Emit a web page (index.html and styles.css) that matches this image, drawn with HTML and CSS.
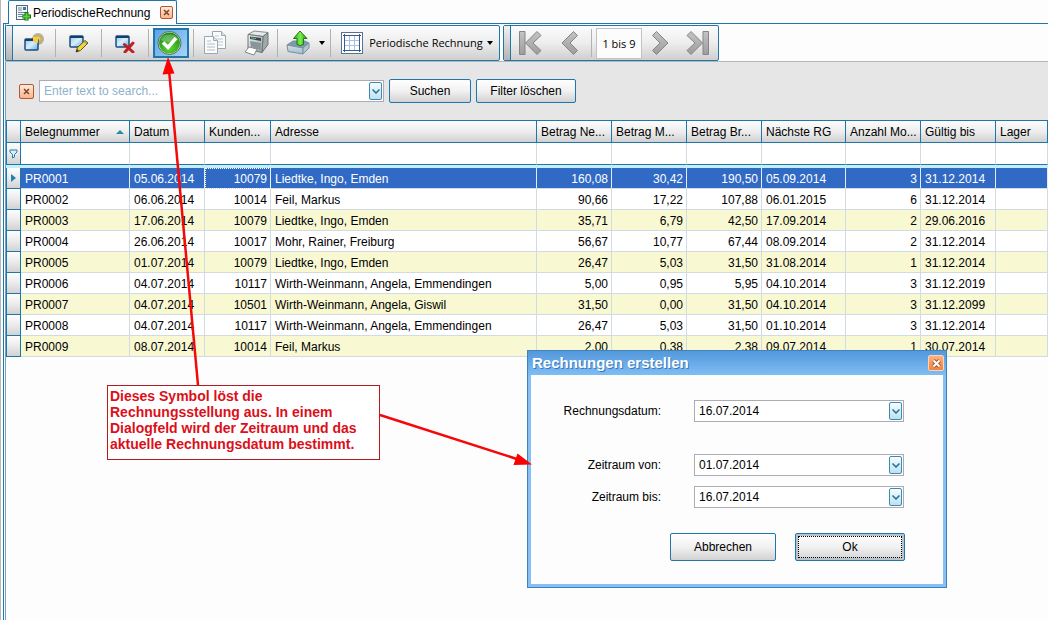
FILE: index.html
```html
<!DOCTYPE html>
<html lang="de">
<head>
<meta charset="utf-8">
<title>PeriodischeRechnung</title>
<link rel="stylesheet" href="styles.css">
</head>
<body>
<svg width="0" height="0" class="defs" aria-hidden="true">
  <defs>
    <linearGradient id="win" x1="0" y1="0" x2="1" y2="1"><stop offset="0" stop-color="#8fc4ee"/><stop offset=".5" stop-color="#d8effc"/><stop offset="1" stop-color="#62aee8"/></linearGradient>
    <linearGradient id="nav" x1="0" y1="0" x2="0" y2="1"><stop offset="0" stop-color="#c4c4c4"/><stop offset="1" stop-color="#9c9c9c"/></linearGradient>
    <radialGradient id="ball" cx=".5" cy=".75" r=".7"><stop offset="0" stop-color="#5ed62f"/><stop offset="1" stop-color="#1f8c1c"/></radialGradient>
    <radialGradient id="glow"><stop offset="0" stop-color="#fff3a0"/><stop offset=".4" stop-color="#e0b84a"/><stop offset="1" stop-color="#77705e" stop-opacity=".45"/></radialGradient>
    <linearGradient id="up" x1="0" y1="0" x2="1" y2="0"><stop offset="0" stop-color="#27a012"/><stop offset=".5" stop-color="#7df050"/><stop offset="1" stop-color="#1f8f10"/></linearGradient>
    <linearGradient id="metal" x1="0" y1="0" x2="1" y2="1"><stop offset="0" stop-color="#f4f6f7"/><stop offset="1" stop-color="#929c9f"/></linearGradient>
    <linearGradient id="tray" x1="0" y1="0" x2="0" y2="1"><stop offset="0" stop-color="#d3e2ec"/><stop offset="1" stop-color="#a3bbca"/></linearGradient>
  </defs>
</svg>

<main class="workspace">
  <header class="tabs">
    <div class="tab">
      <svg class="tab-icon" width="16" height="16" viewBox="0 0 16 16" aria-hidden="true">
        <rect x="1.500" y=".5" width="11" height="14" fill="#f3f7fa" stroke="#52687c"/>
        <path d="M3 3h4M3 5h4M3 7.500h8M3 9.500h5M3 11.500h5" stroke="#6a86a0"/><rect x="8" y="2" width="3" height="3" fill="#3f78a8"/>
        <path d="M11.500 7v8.500M7.500 11.500H16" stroke="#176f12" stroke-width="4"/><path d="M11.500 8v7M8 11.500h7" stroke="#54d33a" stroke-width="2"/>
      </svg>
      <span>PeriodischeRechnung</span>
      <button class="close" type="button" aria-label="Tab schließen"><svg width="7" height="7" viewBox="0 0 7 7"><path d="M1 1l5 5M6 1L1 6" stroke="#7d4225" stroke-width="1.500"/></svg></button>
    </div>
  </header>

  <section class="panel">
    <nav class="toolbars">
      <div class="toolbar">
        <span class="grip"></span>
        <button class="tool w42" type="button" aria-label="Neu"><svg width="20" height="20" viewBox="0 0 20 20"><circle cx="14" cy="6" r="6" fill="url(#glow)"/><rect x="1" y="6" width="13" height="11" rx="1" fill="url(#win)" stroke="#1d4e7c" stroke-width="1.500"/><path d="M1 7h13" stroke="#153f68" stroke-width="2"/><path d="M9 4l5 0 0 6-5-1z" fill="#f6cd45"/></svg></button>
        <i class="sep"></i>
        <button class="tool w45" type="button" aria-label="Bearbeiten"><svg width="22" height="20" viewBox="0 0 22 20"><rect x="2" y="3" width="13" height="11" rx="1" fill="url(#win)" stroke="#1d4e7c" stroke-width="1.500"/><path d="M2 4h13" stroke="#153f68" stroke-width="2"/><path d="M8 19l1.500-4.500L17 7.500l3 2.500-7.500 7.500z" fill="#f1d53a" stroke="#5d5418"/><path d="M16 8.500l3 2.500" stroke="#8a8a80"/><path d="M8 19l1-3 2 2z" fill="#403818"/></svg></button>
        <i class="sep"></i>
        <button class="tool w46" type="button" aria-label="Löschen"><svg width="22" height="20" viewBox="0 0 22 20"><rect x="2" y="3" width="13" height="11" rx="1" fill="url(#win)" stroke="#1d4e7c" stroke-width="1.500"/><path d="M2 4h13" stroke="#153f68" stroke-width="2"/><path d="M10.500 11.500l8.500 7.500M19 10l-8 9" stroke="#c21f22" stroke-width="3" stroke-linecap="round"/></svg></button>
        <i class="sep"></i>
        <button class="tool active" type="button" aria-label="Rechnungen erstellen"><svg width="26" height="26" viewBox="0 0 26 26"><circle cx="12.500" cy="13" r="11.500" fill="#cfe0d4" stroke="#51715b"/><circle cx="12.500" cy="13" r="10.500" fill="url(#ball)"/><path d="M3.500 10a9.500 8 0 0 1 18 0q-9 4-18 0z" fill="#fff" opacity=".25"/><path d="M6 12.500l5 5 8-9.500" fill="none" stroke="#fff" stroke-width="3.500"/></svg></button>
        <i class="sep"></i>
        <button class="tool w42" type="button" aria-label="Kopieren"><svg width="24" height="26" viewBox="0 0 24 26"><path d="M9.500 1.500h9l4 4v13h-13z" fill="#fafcfd" stroke="#9ba7ae"/><path d="M18.500 1.500v4h4" fill="#dfe6ea" stroke="#9ba7ae"/><path d="M12 6h4M12 9h8M12 12h8M12 15h8" stroke="#bcc8cf"/><path d="M1.500 6.500h9l4 4v13h-13z" fill="#fafcfd" stroke="#9ba7ae"/><path d="M10.500 6.500v4h4" fill="#dfe6ea" stroke="#9ba7ae"/><path d="M4 11h4M4 14h8M4 17h8M4 20h8" stroke="#b1bec6"/></svg></button>
        <button class="tool w41" type="button" aria-label="Drucken"><svg width="26" height="26" viewBox="0 0 26 26"><path d="M4 4.500l6-3.500 14 1.500-5 4z" fill="#e6eaea" stroke="#858e90"/><path d="M19 6.500l5-4v12l-6 8z" fill="#9fa8aa" stroke="#6b7577"/><path d="M4 4.500l15 2-1 16-14-3z" fill="url(#metal)" stroke="#6b7577"/><path d="M6 6.500l11 1.500v3L6 9z" fill="#3d4648"/><path d="M7 7.800l5 .8" stroke="#58c38c"/><path d="M6 11l11 2-.5 7L7 17z" fill="#89959a"/><path d="M5 17l8 2-3 6-9-3z" fill="#fff" stroke="#808a8e"/></svg></button>
        <i class="sep"></i>
        <button class="tool export" type="button" aria-label="Exportieren"><svg width="24" height="26" viewBox="0 0 24 26"><path d="M1 15l6-4h12l4 2-5 5H5z" fill="#8199a9" stroke="#7890a0"/><path d="M1 15l16 3v6L2 21.500z" fill="url(#tray)" stroke="#7890a0"/><path d="M17 18l6-5v5l-6 6z" fill="#b3c7d3" stroke="#7890a0"/><path d="M14 1l7 7.500-3.500 0v6q-3.500 2-6.500 0v-6H7.500z" fill="url(#up)" stroke="#1b7a10"/></svg><b class="arrow"></b></button>
        <i class="sep"></i>
        <button class="tool layout" type="button"><svg width="22" height="22" viewBox="0 0 22 22"><rect x=".5" y=".5" width="21" height="21" fill="#fff" stroke="#5d7188"/><path d="M4 8.500h14M4 13.500h14M8.500 4v14M13.500 4v14" stroke="#a8c0e8"/><path d="M3.500 2v18M18.500 2v18M2 3.500h18M2 18.500h18" stroke="#355a94"/></svg><span>Periodische Rechnung</span><b class="arrow"></b></button>
      </div>
      <div class="toolbar">
        <span class="grip"></span>
        <button class="tool first" type="button" aria-label="Erste Seite"><svg width="24" height="26" viewBox="0 0 24 26"><path d="M1.500 1.500h5.500v23H1.500zM19 1.500l4 4-8 7.500 8 7.500-4 4L7.500 13z" fill="url(#nav)" stroke="#858585"/></svg></button>
        <button class="tool prev" type="button" aria-label="Zurück"><svg width="18" height="26" viewBox="0 0 18 26"><path d="M12.500 1.500l4 4L9 13l7.500 7.500-4 4L1 13z" fill="url(#nav)" stroke="#858585"/></svg></button>
        <i class="sep"></i>
        <output class="range">1 bis 9</output>
        <button class="tool next" type="button" aria-label="Weiter"><svg width="18" height="26" viewBox="0 0 18 26"><path d="M5.500 1.500l-4 4L9 13l-7.500 7.500 4 4L17 13z" fill="url(#nav)" stroke="#858585"/></svg></button>
        <button class="tool last" type="button" aria-label="Letzte Seite"><svg width="24" height="26" viewBox="0 0 24 26"><path d="M22.500 1.500H17v23h5.500zM5 1.500l-4 4L9 13l-8 7.500 4 4L16.500 13z" fill="url(#nav)" stroke="#858585"/></svg></button>
      </div>
    </nav>

    <form class="search">
      <button class="close" type="button" aria-label="Suche schließen"><svg width="7" height="7" viewBox="0 0 7 7"><path d="M1 1l5 5M6 1L1 6" stroke="#7d4225" stroke-width="1.500"/></svg></button>
      <div class="combo search-box"><input type="text" placeholder="Enter text to search..." aria-label="Suchtext"><button class="drop" type="button" aria-label="Verlauf"><svg width="8" height="5" viewBox="0 0 8 5"><path d="M.5.5L4 4 7.500.5" fill="none" stroke="#1a7099" stroke-width="1.500"/></svg></button></div>
      <button class="btn" type="button">Suchen</button>
      <button class="btn wide" type="button">Filter löschen</button>
    </form>

    <table class="grid">
      <colgroup><col class="c-ind"><col class="c-no"><col class="c-std"><col class="c-cust"><col class="c-addr"><col class="c-std"><col class="c-std"><col class="c-std"><col class="c-next"><col class="c-std"><col class="c-std"><col></colgroup>
      <thead>
        <tr class="head"><th class="ind"></th><th><span class="sorted">Belegnummer <svg width="8" height="4" viewBox="0 0 8 4"><path d="M4 0l4 4H0z" fill="#2a86ac"/></svg></span></th><th>Datum</th><th>Kunden...</th><th>Adresse</th><th>Betrag Ne...</th><th>Betrag M...</th><th>Betrag Br...</th><th>Nächste RG</th><th>Anzahl Mo...</th><th>Gültig bis</th><th>Lager</th></tr>
        <tr class="filter"><td class="ind"><svg width="9" height="10" viewBox="0 0 9 10"><path d="M1 1h7v2L5.500 5.500V8L3.500 9V5.500L1 3z" fill="#d9f0fa" stroke="#287da3"/></svg></td><td></td><td></td><td></td><td></td><td></td><td></td><td></td><td></td><td></td><td></td><td></td></tr>
        <tr class="gap"><td colspan="12"></td></tr>
      </thead>
      <tbody>
        <tr class="selected"><td class="ind"><svg width="5" height="8" viewBox="0 0 5 8"><path d="M0 0l5 4-5 4z" fill="#2481a8"/></svg></td><td>PR0001</td><td>05.06.2014</td><td class="num focus">10079</td><td>Liedtke, Ingo, Emden</td><td class="num">160,08</td><td class="num">30,42</td><td class="num">190,50</td><td>05.09.2014</td><td class="num">3</td><td>31.12.2014</td><td></td></tr>
        <tr><td class="ind"></td><td>PR0002</td><td>06.06.2014</td><td class="num">10014</td><td>Feil, Markus</td><td class="num">90,66</td><td class="num">17,22</td><td class="num">107,88</td><td>06.01.2015</td><td class="num">6</td><td>31.12.2014</td><td></td></tr>
        <tr><td class="ind"></td><td>PR0003</td><td>17.06.2014</td><td class="num">10079</td><td>Liedtke, Ingo, Emden</td><td class="num">35,71</td><td class="num">6,79</td><td class="num">42,50</td><td>17.09.2014</td><td class="num">2</td><td>29.06.2016</td><td></td></tr>
        <tr><td class="ind"></td><td>PR0004</td><td>26.06.2014</td><td class="num">10017</td><td>Mohr, Rainer, Freiburg</td><td class="num">56,67</td><td class="num">10,77</td><td class="num">67,44</td><td>08.09.2014</td><td class="num">2</td><td>31.12.2014</td><td></td></tr>
        <tr><td class="ind"></td><td>PR0005</td><td>01.07.2014</td><td class="num">10079</td><td>Liedtke, Ingo, Emden</td><td class="num">26,47</td><td class="num">5,03</td><td class="num">31,50</td><td>31.08.2014</td><td class="num">1</td><td>31.12.2014</td><td></td></tr>
        <tr><td class="ind"></td><td>PR0006</td><td>04.07.2014</td><td class="num">10117</td><td>Wirth-Weinmann, Angela, Emmendingen</td><td class="num">5,00</td><td class="num">0,95</td><td class="num">5,95</td><td>04.10.2014</td><td class="num">3</td><td>31.12.2019</td><td></td></tr>
        <tr><td class="ind"></td><td>PR0007</td><td>04.07.2014</td><td class="num">10501</td><td>Wirth-Weinmann, Angela, Giswil</td><td class="num">31,50</td><td class="num">0,00</td><td class="num">31,50</td><td>04.10.2014</td><td class="num">3</td><td>31.12.2099</td><td></td></tr>
        <tr><td class="ind"></td><td>PR0008</td><td>04.07.2014</td><td class="num">10117</td><td>Wirth-Weinmann, Angela, Emmendingen</td><td class="num">26,47</td><td class="num">5,03</td><td class="num">31,50</td><td>01.10.2014</td><td class="num">3</td><td>31.12.2014</td><td></td></tr>
        <tr><td class="ind"></td><td>PR0009</td><td>08.07.2014</td><td class="num">10014</td><td>Feil, Markus</td><td class="num">2,00</td><td class="num">0,38</td><td class="num">2,38</td><td>09.07.2014</td><td class="num">1</td><td>30.07.2014</td><td></td></tr>
      </tbody>
    </table>
  </section>
</main>

<section class="dialog" role="dialog" aria-labelledby="dialog-title">
  <header class="dialog-head"><h2 id="dialog-title">Rechnungen erstellen</h2><button class="close hot" type="button" aria-label="Schließen"><svg width="9" height="9" viewBox="0 0 9 9"><path d="M1.500 1.500l6 6M7.500 1.500l-6 6" stroke="#a9562c" stroke-width="4"/><path d="M1.500 1.500l6 6M7.500 1.500l-6 6" stroke="#fff" stroke-width="2"/></svg></button></header>
  <form class="dialog-body">
    <div class="field lead"><label for="date">Rechnungsdatum:</label><div class="combo"><input id="date" type="text" value="16.07.2014"><button class="drop" type="button" aria-label="Kalender"><svg width="8" height="5" viewBox="0 0 8 5"><path d="M.5.5L4 4 7.500.5" fill="none" stroke="#1a7099" stroke-width="1.500"/></svg></button></div></div>
    <div class="field"><label for="from">Zeitraum von:</label><div class="combo"><input id="from" type="text" value="01.07.2014"><button class="drop" type="button" aria-label="Kalender"><svg width="8" height="5" viewBox="0 0 8 5"><path d="M.5.5L4 4 7.500.5" fill="none" stroke="#1a7099" stroke-width="1.500"/></svg></button></div></div>
    <div class="field"><label for="to">Zeitraum bis:</label><div class="combo"><input id="to" type="text" value="16.07.2014"><button class="drop" type="button" aria-label="Kalender"><svg width="8" height="5" viewBox="0 0 8 5"><path d="M.5.5L4 4 7.500.5" fill="none" stroke="#1a7099" stroke-width="1.500"/></svg></button></div></div>
    <div class="actions"><button class="btn" type="button">Abbrechen</button><button class="btn default" type="button">Ok</button></div>
  </form>
</section>

<p class="callout">Dieses Symbol löst die Rechnungsstellung aus. In einem Dialogfeld wird der Zeitraum und das aktuelle Rechnungsdatum bestimmt.</p>
<svg class="pointers" width="1048" height="620" viewBox="0 0 1048 620" aria-hidden="true">
  <path d="M198 385L169 70M380 415l140 45" stroke="#f40808" stroke-width="2.500"/>
  <path d="M168 57l6.500 16.500-12 1zM532 464.500l-18.500.5 4-11.500z" fill="#ff0000"/>
</svg>
</body>
</html>
```
FILE: styles.css
```css
* { box-sizing: border-box; }

body {
  margin: 0;
  min-height: 100vh;
  position: relative;
  overflow: hidden;
  background: #fdfdfd;
  color: #000;
  font: 12px/16px "Liberation Sans", Arial, sans-serif;
  --blue: #1f76a9;
}

button, input {
  font: inherit;
  color: inherit;
  margin: 0;
  padding: 0;
}

svg { display: block; flex: none; }
.defs { position: absolute; }

.workspace {
  display: flex;
  flex-direction: column;
  min-height: 100vh;
  padding-left: 2px;
  border-left: 1px solid #b8b8b8;
}

/* Document tab */
.tabs {
  display: flex;
  padding-left: 5px;
  height: 23px;
}

.tab {
  display: flex;
  align-items: center;
  gap: 2px;
  height: 24px;
  padding: 0 3px 0 6px;
  border: 1px solid var(--blue);
  border-bottom: 0;
  border-radius: 2px 2px 0 0;
  background: #fdfdfd;
  z-index: 1;
}

.tab .close { margin-left: 8px; }

.close {
  display: grid;
  place-items: center;
  flex: none;
  width: 13px;
  height: 13px;
  border: 1px solid #ae5a35;
  border-radius: 2px;
  background: linear-gradient(#ffeadb, #f9b48b);
}

.close.hot {
  width: 16px;
  height: 16px;
  border-color: #ffd3b5;
  background: linear-gradient(#f9b27f, #ef8440);
}

.panel {
  flex: 1;
  border: 1px solid var(--blue);
  border-right: 0;
  border-bottom: 0;
  padding-left: 2px;
  box-shadow: inset 1px 0 #fff, inset 2px 0 #6aa5c8;
}

/* Toolbars */
.toolbars {
  display: flex;
  gap: 3px;
  padding-top: 1px;
  border-bottom: 1px solid #b6b6b6;
  margin-left: -1px;
}

.toolbar {
  display: flex;
  align-items: center;
  height: 36px;
  border: 1px solid var(--blue);
  border-radius: 2px;
  background: linear-gradient(#fcfcfc, #ededed 50%, #cfcfcf);
}

.grip {
  align-self: stretch;
  width: 7px;
  border-right: 1px solid var(--blue);
  background: linear-gradient(#f2f2f2, #b4b4b4);
}

.sep {
  width: 1px;
  height: 28px;
  background: #b2b2b2;
}

.tool {
  display: flex;
  align-items: center;
  justify-content: center;
  height: 30px;
  border: 0;
  background: none;
}

.w41 { width: 41px; }
.w42 { width: 42px; }
.w45 { width: 45px; }
.w46 { width: 46px; }

.tool.active {
  width: 36px;
  margin: 0 4px;
  padding-right: 2px;
  border: 2px solid var(--blue);
  background: linear-gradient(135deg, #5ba4e8, #a5d2f8);
}

.export { width: 52px; gap: 9px; padding-left: 2px; }
.layout {
  width: 168px;
  gap: 6px;
  padding-left: 4px;
  font: 11px/16px "Open Sans", "Noto Sans", sans-serif;
}

.arrow {
  border: 3px solid transparent;
  border-top: 4px solid #000;
  border-bottom: 0;
}

.layout .arrow { margin-left: -2px; }
.first { width: 38px; }
.prev { width: 42px; }
.next { width: 36px; }
.last { width: 40px; }

.range {
  width: 46px;
  height: 31px;
  margin-left: 4px;
  border: 1px solid #c2c2c2;
  background: #fcfcfc;
  font: 11px/29px "Open Sans", "Noto Sans", sans-serif;
  text-align: center;
}

/* Search bar */
.search {
  display: flex;
  align-items: center;
  gap: 5px;
  height: 58px;
  padding-left: 13px;
  background: #e6e6e6;
}

.search .close { width: 15px; height: 15px; }

.combo {
  display: flex;
  align-items: center;
  height: 22px;
  padding-right: 1px;
  border: 1px solid #acacb4;
  background: #fff;
}

.combo input {
  flex: 1;
  min-width: 0;
  padding-left: 4px;
  border: 0;
  outline: 0;
  background: none;
}

.combo input::placeholder { color: #8fb1cb; opacity: 1; }
.search-box { width: 345px; }

.drop {
  display: grid;
  place-items: center;
  width: 13px;
  height: 18px;
  border: 1px solid #3a8bb4;
  border-radius: 2px;
  background: linear-gradient(#f8fdff, #c0e0ee);
}

.btn {
  width: 82px;
  height: 24px;
  border: 1px solid var(--blue);
  border-radius: 2px;
  background: linear-gradient(#fff, #f1f1f1 50%, #d2d2d2);
}

.btn.wide { width: 100px; }

/* Data grid */
.grid {
  width: 100%;
  table-layout: fixed;
  border-collapse: separate;
  border-spacing: 0;
}

.c-ind { width: 15px; }
.c-no { width: 109px; }
.c-std { width: 75px; }
.c-cust { width: 66px; }
.c-addr { width: 266px; }
.c-next { width: 84px; }

.grid th, .grid td {
  padding: 0 3px 0 4px;
  overflow: hidden;
  white-space: nowrap;
  border-right: 1px solid #d3dbe2;
  border-bottom: 1px solid #d3dbe2;
}

.head th {
  height: 23px;
  font-weight: normal;
  text-align: left;
  border: 1px solid var(--blue);
  border-left: 0;
  background: linear-gradient(#fdfdfd, #ebebeb 55%, #d0d0d0);
}

.sorted {
  display: flex;
  align-items: center;
  justify-content: space-between;
  padding-right: 2px;
}

.grid .filter td { height: 22px; border-bottom-color: var(--blue); background: #fff; }
.grid .gap td { height: 3px; padding: 0; border: 0; background: #c5eff8; }
.grid tbody td { height: 21px; padding-top: 1px; background: #fff; }
.grid tbody tr:nth-child(odd) td { background: #f8f8d2; }

.grid tbody tr.selected td {
  background: #316ac5;
  color: #fff;
  border-right-color: #e4ecf8;
}

.grid .num { text-align: right; }
.grid .focus { outline: 1px dotted #fff; outline-offset: -1px; }

.grid th.ind, .grid tbody tr td.ind, .grid .filter .ind {
  padding: 0 0 0 4px;
  border-left: 1px solid var(--blue);
  border-right: 1px solid var(--blue);
  border-bottom: 1px solid var(--blue);
  background: linear-gradient(#fdfdfd, #ebebeb 50%, #d2d2d2);
}

.grid .filter td.ind { padding-left: 2px; }

/* Dialog */
.dialog {
  position: absolute;
  left: 527px;
  top: 350px;
  width: 420px;
  border: 1px solid #3f83bd;
  padding: 0 3px 3px;
  background: #86bff3;
}

.dialog-head {
  display: flex;
  align-items: center;
  justify-content: space-between;
  height: 24px;
  margin: 0 -3px;
  padding: 0 2px 0 4px;
  background: linear-gradient(#5398dc, #7fbcf3);
}

.dialog-head h2 {
  margin: 0;
  color: #fff;
  font: bold 15px/20px "Liberation Sans", Arial, sans-serif;
  text-shadow: 1px 1px #3b78b8;
}

.dialog-body {
  display: flex;
  flex-direction: column;
  gap: 10px;
  padding: 25px 39px 23px 16px;
  background: #fdfdfd;
}

.field {
  display: grid;
  grid-template-columns: 114px 210px;
  justify-content: end;
  align-items: center;
  column-gap: 33px;
}

.field label { text-align: right; }
.field.lead { margin-bottom: 22px; }

.actions {
  display: flex;
  justify-content: flex-end;
  gap: 19px;
  margin: 15px -1px 0 0;
}

.actions .btn { width: 106px; height: 28px; }

.actions .default {
  width: 110px;
  outline: 1px dotted #000;
  outline-offset: -4px;
  box-shadow: inset 0 0 0 2px #b9c4ca;
}

/* Annotation */
.callout {
  position: absolute;
  left: 107px;
  top: 385px;
  width: 273px;
  margin: 0;
  padding: 2px 2px 7px;
  border: 1px solid #b51a20;
  background: #fff;
  color: #dc0f19;
  font: bold 14px/16px "Liberation Sans", Arial, sans-serif;
}

.pointers {
  position: absolute;
  left: 0;
  top: 0;
  pointer-events: none;
}
```
